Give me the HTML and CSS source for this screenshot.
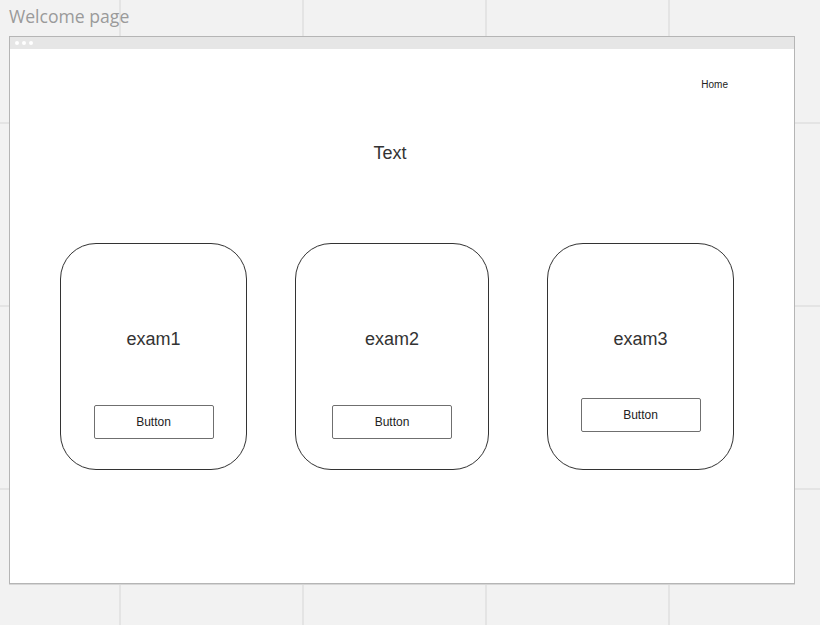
FILE: index.html
```html
<!DOCTYPE html>
<html>
<head>
<meta charset="utf-8">
<link rel="stylesheet" href="styles.css">
</head>
<body>
<div class="canvas">
  <div class="page-title">Welcome page</div>
  <div class="window">
    <div class="titlebar">
      <span class="dot"></span><span class="dot"></span><span class="dot"></span>
    </div>
    <div class="content">
      <nav class="nav"><span class="nav-link">Home</span></nav>
      <div class="heading">Text</div>
      <div class="cards">
        <div class="card card-1">
          <div class="card-label">exam1</div>
          <div class="btn">Button</div>
        </div>
        <div class="card card-2">
          <div class="card-label">exam2</div>
          <div class="btn">Button</div>
        </div>
        <div class="card card-3">
          <div class="card-label">exam3</div>
          <div class="btn btn-raised">Button</div>
        </div>
      </div>
    </div>
  </div>
</div>
</body>
</html>
```
FILE: styles.css
```css
html, body {
  margin: 0;
  padding: 0;
}
body {
  width: 820px;
  height: 625px;
  overflow: hidden;
  background-color: #f2f2f2;
  background-image:
    linear-gradient(to right, #e4e4e4 0, #e4e4e4 2px, transparent 2px),
    linear-gradient(to bottom, #e4e4e4 0, #e4e4e4 2px, transparent 2px);
  background-size: 183px 183px;
  background-position: 119px 122px;
  font-family: "Liberation Sans", Arial, sans-serif;
  color: #333;
}
.canvas {
  padding: 4px 0 0 9px;
}
.page-title {
  font-family: "Open Sans", "Liberation Sans", sans-serif;
  font-size: 17.6px;
  line-height: 24px;
  color: #9a9a9a;
  height: 24px;
  margin-bottom: 8px;
}
.window {
  width: 784px;
  height: 546px;
  border: 1px solid #b5b5b5;
  box-shadow: 0 1px 0 #d6d6d6;
  background: #fff;
  display: flex;
  flex-direction: column;
}
.titlebar {
  height: 12px;
  background: #e6e6e6;
  display: flex;
  align-items: center;
  gap: 3px;
  padding-left: 5px;
}
.dot {
  width: 4px;
  height: 4px;
  border-radius: 50%;
  background: #fff;
}
.content {
  flex: 1;
  padding-top: 30px;
}
.nav {
  display: flex;
  justify-content: flex-end;
  padding-right: 66px;
}
.nav-link {
  font-size: 10px;
  line-height: 12px;
  color: #222;
}
.heading {
  width: 760px;
  text-align: center;
  font-size: 18px;
  line-height: 22px;
  margin-top: 51px;
}
.cards {
  display: flex;
  margin-top: 79px;
  padding-left: 50px;
}
.card {
  box-sizing: border-box;
  width: 187px;
  height: 227px;
  border: 1px solid #333;
  border-radius: 36px;
  display: flex;
  flex-direction: column;
  align-items: center;
  padding-top: 84px;
}
.card-2 {
  width: 194px;
  margin-left: 48px;
}
.card-3 {
  margin-left: 58px;
}
.card-label {
  font-size: 18px;
  line-height: 22px;
}
.btn {
  box-sizing: border-box;
  width: 120px;
  height: 34px;
  border: 1px solid #6f6f6f;
  border-radius: 2px;
  display: flex;
  align-items: center;
  justify-content: center;
  font-size: 12px;
  color: #222;
  margin-top: 55px;
}
.btn-raised {
  margin-top: 48px;
}
```
